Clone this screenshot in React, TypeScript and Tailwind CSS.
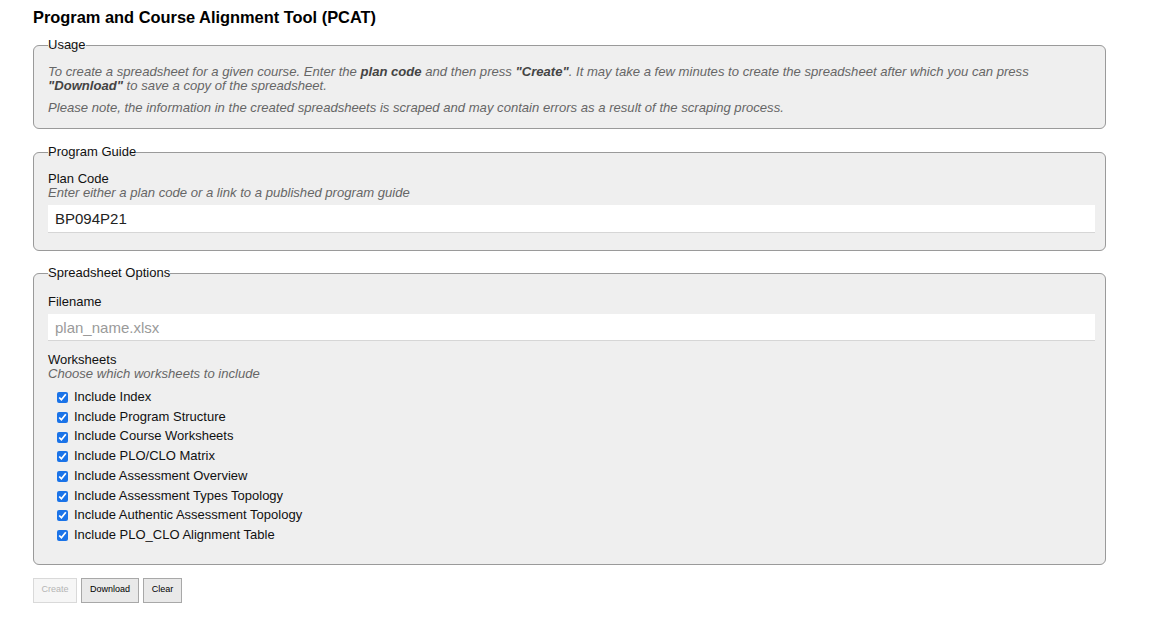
import React, { useState } from 'react'

const worksheets = [
  'Include Index',
  'Include Program Structure',
  'Include Course Worksheets',
  'Include PLO/CLO Matrix',
  'Include Assessment Overview',
  'Include Assessment Types Topology',
  'Include Authentic Assessment Topology',
  'Include PLO_CLO Alignment Table',
]

export default function App() {
  const [planCode, setPlanCode] = useState('BP094P21')
  const [filename, setFilename] = useState('')
  const [checked, setChecked] = useState<boolean[]>(worksheets.map(() => true))

  const toggle = (i: number) => {
    setChecked(prev => prev.map((v, j) => (j === i ? !v : v)))
  }

  return (
    <div className="min-h-screen bg-white px-[33px] pt-[7px] font-['Liberation_Sans',Arial,sans-serif] text-[#111]">
      <h1 className="text-[16.4px] leading-[20px] font-bold text-black">Program and Course Alignment Tool (PCAT)</h1>

      {/* Usage */}
      <fieldset className="mt-[11px] w-[1073px] rounded-[6px] border border-[#9a9a9a] bg-[#efefef] pl-[14px] pr-[10px] pt-[13px] pb-[13px]">
        <legend className="text-[13px] leading-[14px]">Usage</legend>
        <p className="pr-[20px] text-[13.1px] leading-[14px] italic text-[#666]">
          To create a spreadsheet for a given course. Enter the <b className="text-[#444]">plan code</b> and then press{' '}
          <b className="text-[#444]">"Create"</b>. It may take a few minutes to create the spreadsheet after which you can press{' '}
          <b className="text-[#444]">"Download"</b> to save a copy of the spreadsheet.
        </p>
        <p className="mt-[8px] text-[13.1px] leading-[14px] italic text-[#666]">
          Please note, the information in the created spreadsheets is scraped and may contain errors as a result of the scraping process.
        </p>
      </fieldset>

      {/* Program Guide */}
      <fieldset className="mt-[16px] w-[1073px] rounded-[6px] border border-[#9a9a9a] bg-[#efefef] pl-[14px] pr-[10px] pt-[13px] pb-[17px]">
        <legend className="text-[13px] leading-[14px]">Program Guide</legend>
        <label className="block text-[13px] leading-[14px]">Plan Code</label>
        <div className="text-[13.1px] leading-[14px] italic text-[#666]">Enter either a plan code or a link to a published program guide</div>
        <input
          value={planCode}
          onChange={e => setPlanCode(e.target.value)}
          className="mt-[5px] block h-[28px] w-full border-b border-[#d6d6d6] bg-white pl-[7px] text-[15px] text-[#222] outline-none"
        />
      </fieldset>

      {/* Spreadsheet Options */}
      <fieldset className="mt-[15px] w-[1073px] rounded-[6px] border border-[#9a9a9a] bg-[#efefef] pl-[14px] pr-[10px] pt-[15px] pb-[19px]">
        <legend className="text-[13px] leading-[14px]">Spreadsheet Options</legend>
        <label className="block text-[13px] leading-[14px]">Filename</label>
        <input
          value={filename}
          onChange={e => setFilename(e.target.value)}
          placeholder="plan_name.xlsx"
          className="mt-[5px] block h-[27px] w-full border-b border-[#d6d6d6] bg-white pl-[7px] text-[15px] text-[#222] placeholder:text-[#9a9a9a] outline-none"
        />
        <label className="mt-[12px] block text-[13px] leading-[14px]">Worksheets</label>
        <div className="text-[13.1px] leading-[14px] italic text-[#666]">Choose which worksheets to include</div>
        <div className="mt-[6px]">
          {worksheets.map((w, i) => (
            <label key={w} className="flex h-[19.7px] items-center pl-[9px] text-[13px]">
              <input
                type="checkbox"
                checked={checked[i]}
                onChange={() => toggle(i)}
                className="mr-[6px] mt-[2px] h-[11px] w-[11px] accent-[#1a73e8]"
              />
              {w}
            </label>
          ))}
        </div>
      </fieldset>

      <div className="mt-[13px] flex gap-[4px]">
        <button disabled className="h-[25px] w-[44px] border border-[#d9d9d9] bg-[#f6f6f6] text-[9px] text-[#b5b5b5]">
          Create
        </button>
        <button className="h-[25px] w-[58px] border border-[#a8a8a8] bg-[#e9e9e9] text-[9px] text-black">
          Download
        </button>
        <button className="h-[25px] w-[39px] border border-[#a8a8a8] bg-[#e9e9e9] text-[9px] text-black">
          Clear
        </button>
      </div>
    </div>
  )
}
